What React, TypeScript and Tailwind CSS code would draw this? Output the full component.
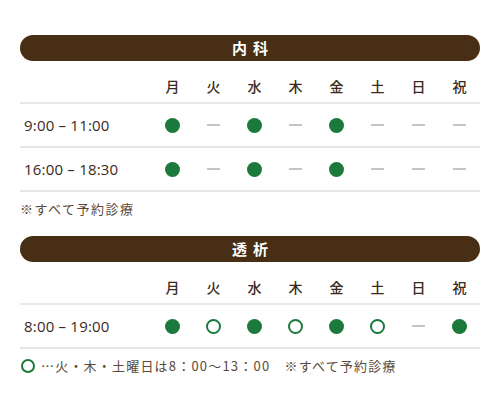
import React from "react";

type Mark = "full" | "open" | "none";

const days = ["月", "火", "水", "木", "金", "土", "日", "祝"];

function Cell({ m }: { m: Mark }) {
  return (
    <div className="w-[41px] flex items-center justify-center">
      {m === "full" && <span className="block w-[15px] h-[15px] rounded-full bg-[#1b7a3b]" />}
      {m === "open" && <span className="block w-[15px] h-[15px] rounded-full border-2 border-[#1b7a3b]" />}
      {m === "none" && <span className="block w-[13px] h-[2px] bg-[#c4c4c4]" />}
    </div>
  );
}

function Table({ title, rows }: { title: string; rows: { time: string; marks: Mark[] }[] }) {
  return (
    <div>
      <div className="h-[26px] rounded-full bg-[#472e14] flex items-center justify-center">
        <span
          className="text-white font-bold text-[15px] tracking-[6px] pl-[6px]"
          style={{ fontFamily: '"Noto Sans CJK JP", sans-serif' }}
        >
          {title}
        </span>
      </div>
      <div className="flex h-[43px] pt-[9px] items-center border-b-2 border-[#e9e9e9]">
        <div className="w-[132px]" />
        {days.map((d) => (
          <div
            key={d}
            className="w-[41px] text-center text-[14px] font-medium text-[#3b2a1b]"
            style={{ fontFamily: '"Noto Sans CJK JP", sans-serif' }}
          >
            {d}
          </div>
        ))}
      </div>
      {rows.map((r, i) => (
        <div key={i} className="flex h-[44px] items-center border-b-2 border-[#e6e6e6]">
          <div
            className="w-[132px] pl-[4px] text-[15px] font-medium text-[#3b2a1b] tracking-[0.2px]"
            style={{ fontFamily: '"Open Sans", sans-serif' }}
          >
            {r.time}
          </div>
          {r.marks.map((m, j) => (
            <Cell key={j} m={m} />
          ))}
        </div>
      ))}
    </div>
  );
}

export default function App() {
  const jp = { fontFamily: '"Noto Sans CJK JP", sans-serif' };
  return (
    <div className="w-[500px] h-[412px] bg-white px-[20px] pt-[35px]">
      <Table
        title="内科"
        rows={[
          { time: "9:00 – 11:00", marks: ["full", "none", "full", "none", "full", "none", "none", "none"] },
          { time: "16:00 – 18:30", marks: ["full", "none", "full", "none", "full", "none", "none", "none"] },
        ]}
      />
      <div className="mt-[8px] mb-[18px] h-[18px] flex items-center text-[13px] text-[#5a4838] tracking-[1.5px]" style={jp}>
        ※すべて予約診療
      </div>
      <Table
        title="透析"
        rows={[{ time: "8:00 – 19:00", marks: ["full", "open", "full", "open", "full", "open", "none", "full"] }]}
      />
      <div className="mt-[8px] h-[18px] flex items-center text-[13px] text-[#5a4838]" style={jp}>
        <span className="block w-[14px] h-[14px] rounded-full border-2 border-[#1b7a3b] ml-[1px] mr-[6px]" />
        <span className="tracking-[1.2px]">…火・木・土曜日は8：00〜13：00　※すべて予約診療</span>
      </div>
    </div>
  );
}
